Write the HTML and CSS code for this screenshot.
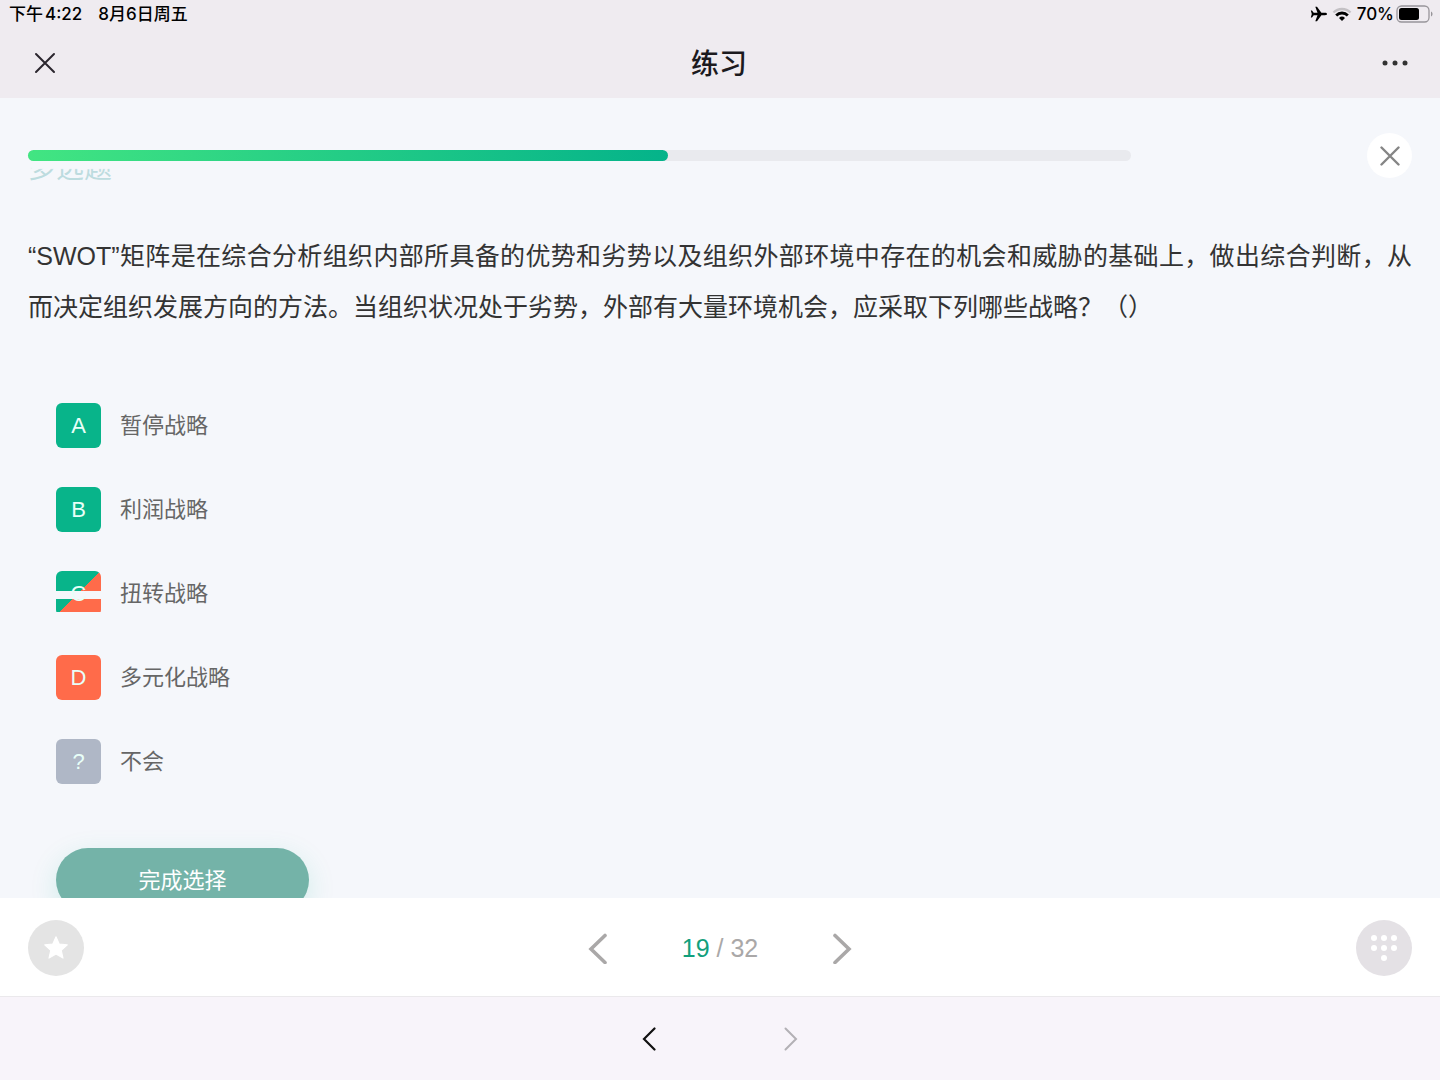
FILE: index.html
```html
<!DOCTYPE html>
<html lang="zh-CN">
<head>
    <meta charset="UTF-8">
    <meta name="viewport" content="width=device-width, initial-scale=1.0">
    <title>练习</title>
    <link rel="stylesheet" href="styles.css">
</head>
<body>
    <header class="header">
        <div class="status">
            <div class="status-left">
                <div class="time"><span>下午</span><span>4:22</span></div>
                <span>8月6日周五</span>
            </div>
            <div class="status-right">
                <svg width="17" height="16" viewBox="0 0 17 16"><path d="M17 8c0-.8-1-1.200-2-1.200h-3.600L7 .8H5.300l2.200 6H3.700L2 4.600H.8L1.800 8l-1 3.400H2l1.700-2.200h3.800l-2.200 6H7l4.400-6H15c1 0 2-.4 2-1.200z"/></svg>
                <svg width="20" height="14" viewBox="0 0 20 14">
                    <path d="M1.500 5.500a12 12 0 0 1 17 0" fill="none" stroke="#c4c1c5" stroke-width="2.400"/>
                    <path d="M4.200 8.400a8.200 8.200 0 0 1 11.600 0" fill="none" stroke="#000" stroke-width="2.800"/>
                    <path d="M10 14l-3-3a4.400 4.400 0 0 1 6 0z"/>
                </svg>
                <span>70%</span>
                <svg width="37" height="18" viewBox="0 0 37 18">
                    <rect x="1" y="1" width="32" height="16" rx="4.500" fill="none" stroke="#98959a" stroke-width="1.300"/>
                    <rect x="3" y="3" width="20" height="12" rx="2.500"/>
                    <path d="M35 6.500c2 .8 2 4.200 0 5z" fill="#98959a"/>
                </svg>
            </div>
        </div>
        <div class="titlebar">
            <button class="icon-btn" aria-label="关闭">
                <svg width="22" height="22" viewBox="0 0 22 22"><path d="M2 2l18 18M20 2L2 20" fill="none" stroke="#2b262e" stroke-width="2" stroke-linecap="round"/></svg>
            </button>
            <h1>练习</h1>
            <button class="icon-btn" aria-label="更多">
                <svg width="26" height="6" viewBox="0 0 26 6" fill="#333"><circle cx="3" cy="3" r="2.500"/><circle cx="13" cy="3" r="2.500"/><circle cx="23" cy="3" r="2.500"/></svg>
            </button>
        </div>
    </header>

    <main class="content">
        <div class="progress-row">
            <div class="progress">
                <div class="progress-fill" style="width: 58%"></div>
            </div>
            <button class="exit" aria-label="退出">
                <svg width="20" height="20" viewBox="0 0 20 20"><path d="M1.500 1.500l17 17M18.500 1.500l-17 17" fill="none" stroke="#858585" stroke-width="2.400" stroke-linecap="round"/></svg>
            </button>
        </div>
        <div class="type">多选题</div>
        <p class="question">“SWOT”矩阵是在综合分析组织内部所具备的优势和劣势以及组织外部环境中存在的机会和威胁的基础上，做出综合判断，从而决定组织发展方向的方法。当组织状况处于劣势，外部有大量环境机会，应采取下列哪些战略？（）</p>
        <div class="options">
            <button class="option"><span class="mark green">A</span>暂停战略</button>
            <button class="option"><span class="mark green">B</span>利润战略</button>
            <button class="option"><span class="mark mixed">C</span>扭转战略</button>
            <button class="option"><span class="mark orange">D</span>多元化战略</button>
            <button class="option"><span class="mark grey">?</span>不会</button>
        </div>
        <button class="submit">完成选择</button>
    </main>

    <footer class="pager">
        <button class="round" aria-label="收藏">
            <svg width="28" height="28" viewBox="0 0 26 26"><path d="M13 2.500l3 6.800 7.500.8-5.600 5 1.600 7.300-6.500-3.700-6.500 3.700 1.600-7.300-5.600-5 7.500-.8z" fill="#fff" stroke="#fff" stroke-linejoin="round"/></svg>
        </button>
        <div class="pages">
            <button class="icon-btn" aria-label="上一题">
                <svg width="20" height="32" viewBox="0 0 20 32"><path d="M17 3.500L3 17l14 13.500" fill="none" stroke="#aaa8a8" stroke-width="3.600" stroke-linecap="round"/></svg>
            </button>
            <span class="count"><b>19</b> / 32</span>
            <button class="icon-btn" aria-label="下一题">
                <svg width="20" height="32" viewBox="0 0 20 32"><path d="M3 3.500L17 17 3 30.500" fill="none" stroke="#aaa8a8" stroke-width="3.600" stroke-linecap="round"/></svg>
            </button>
        </div>
        <button class="round card" aria-label="答题卡">
            <svg width="28" height="28" viewBox="0 0 28 28" fill="#fff"><circle cx="4" cy="4" r="3"/><circle cx="14" cy="4" r="3"/><circle cx="24" cy="4" r="3"/><circle cx="4" cy="14" r="3"/><circle cx="14" cy="14" r="3"/><circle cx="24" cy="14" r="3"/><circle cx="14" cy="24" r="3"/></svg>
        </button>
    </footer>

    <nav class="toolbar">
        <button class="icon-btn" aria-label="后退">
            <svg width="14" height="24" viewBox="0 0 14 24"><path d="M12.500 1.500L2 12l10.500 10.500" fill="none" stroke="#111" stroke-width="2.200" stroke-linecap="round"/></svg>
        </button>
        <button class="icon-btn" aria-label="前进" disabled>
            <svg width="14" height="24" viewBox="0 0 14 24"><path d="M1.500 1.500L12 12 1.500 22.500" fill="none" stroke="#b3b0b5" stroke-width="2" stroke-linecap="round"/></svg>
        </button>
    </nav>
</body>
</html>
```
FILE: styles.css
```css
* {
    box-sizing: border-box;
}
body {
    margin: 0;
    height: 100vh;
    display: flex;
    flex-direction: column;
    background-color: #f5f7fb;
    font-family: "Liberation Sans", "Noto Sans CJK SC", sans-serif;
    color: #333;
}
button {
    padding: 0;
    border: none;
    background: none;
    font-family: inherit;
    cursor: pointer;
}
svg {
    display: block;
}
.icon-btn {
    display: flex;
}

/* Status bar and title */
.header {
    background-color: #efebf0;
}
.status {
    height: 28px;
    padding: 0 7px 0 9px;
    display: flex;
    justify-content: space-between;
    align-items: center;
    font-family: Inter, "Noto Sans CJK SC", sans-serif;
    font-size: 17px;
    font-weight: 500;
    line-height: 28px;
    color: #000;
}
.status-left {
    display: flex;
    gap: 16px;
}
.time {
    display: flex;
    gap: 2px;
}
.status-right {
    display: flex;
    align-items: center;
    gap: 5px;
}
.status-right span + svg {
    margin-left: -3px;
}
.titlebar {
    height: 70px;
    padding: 0 32px 0 34px;
    display: flex;
    justify-content: space-between;
    align-items: center;
}
.titlebar h1 {
    margin: 0;
    padding-top: 4px;
    font-size: 28px;
    font-weight: 500;
    line-height: 40px;
    color: #1c1a1e;
}

.content {
    flex: 1;
    min-height: 0;
    overflow: hidden;
    padding: 35px 28px 0;
}
.progress-row {
    position: relative;
    z-index: 1;
    display: flex;
    align-items: center;
    gap: 236px;
}
.progress {
    flex: 1;
    height: 11px;
    border-radius: 6px;
    background-color: #e9eaee;
    box-shadow: 0 4px 1px 4px #f5f7fb;
}
.progress-fill {
    height: 100%;
    border-radius: 6px;
    background: linear-gradient(to right, #42e582, #04b38a);
}
.exit {
    width: 45px;
    height: 45px;
    display: flex;
    justify-content: center;
    align-items: center;
    border-radius: 50%;
    background-color: #fff;
}
.type {
    margin-top: -23px;
    font-size: 28px;
    line-height: 28px;
    color: #bddcdf;
}
.question {
    margin: 48px 0 70px;
    font-size: 25px;
    line-height: 51px;
    text-align: justify;
    text-spacing-trim: space-all;
}
.options {
    padding-left: 28px;
    display: flex;
    flex-direction: column;
    align-items: flex-start;
    gap: 39px;
}
.option {
    display: flex;
    align-items: center;
    gap: 19px;
    font-size: 22px;
    line-height: 45px;
    color: #666;
}
.mark {
    width: 45px;
    height: 45px;
    border-radius: 6px;
    text-align: center;
    color: #e8fff8;
}
.green {
    background-color: #08b48a;
}
.orange {
    background-color: #ff6b4a;
}
.grey {
    background-color: #afb7c6;
}
.mixed {
    background:
        linear-gradient(#f5f7fb, #f5f7fb) 0 20px / 100% 8px no-repeat,
        linear-gradient(#f5f7fb, #f5f7fb) 0 41px / 100% 4px no-repeat,
        linear-gradient(135deg, #08b48a 50%, #ff6b4a 50%);
}
.submit {
    width: 253px;
    height: 64px;
    margin: 64px 0 0 28px;
    padding-bottom: 4px;
    border-radius: 32px;
    background-color: #74b3a8;
    box-shadow: 0 8px 28px rgba(8, 180, 138, 0.15);
    font-size: 22px;
    color: #fff;
}

/* Question pager */
.pager {
    position: relative;
    height: 98px;
    padding: 2px 28px 0;
    display: flex;
    justify-content: space-between;
    align-items: center;
    background-color: #fff;
}
.round {
    width: 56px;
    height: 56px;
    display: flex;
    justify-content: center;
    align-items: center;
    border-radius: 50%;
    background-color: #e4e4e4;
}
.card {
    background-color: #e4e1e5;
}
.pages {
    display: flex;
    align-items: center;
    gap: 74px;
}
.count {
    font-size: 25px;
    line-height: 32px;
    color: #aaa8a8;
}
.count b {
    font-weight: normal;
    color: #129f7c;
}

/* Browser toolbar */
.toolbar {
    height: 84px;
    display: flex;
    justify-content: center;
    align-items: center;
    gap: 128px;
    border-top: 1px solid #ebe9ec;
    background-color: #f8f4fa;
}
```
